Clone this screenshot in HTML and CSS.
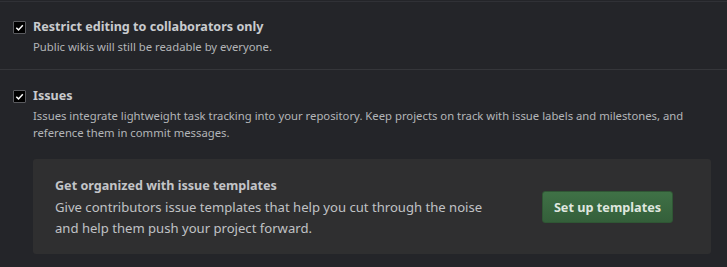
FILE: index.html
```html
<!DOCTYPE html>
<html lang="en">
<head>
<meta charset="utf-8">
<title>Settings</title>
<link rel="stylesheet" href="styles.css">
</head>
<body>
<div class="settings">
  <div class="option first">
    <span class="checkbox"><svg viewBox="0 0 12 12" width="11" height="11"><path d="M2.5 6.3 L4.9 8.6 L9.6 3.6" fill="none" stroke="#fff" stroke-width="1.6"/></svg></span>
    <div class="option-body">
      <div class="option-title">Restrict editing to collaborators only</div>
      <div class="option-note">Public wikis will still be readable by everyone.</div>
    </div>
  </div>
  <div class="option second">
    <span class="checkbox"><svg viewBox="0 0 12 12" width="11" height="11"><path d="M2.5 6.3 L4.9 8.6 L9.6 3.6" fill="none" stroke="#fff" stroke-width="1.6"/></svg></span>
    <div class="option-body">
      <div class="option-title">Issues</div>
      <div class="option-note">Issues integrate lightweight task tracking into your repository. Keep projects on track with issue labels and milestones, and reference them in commit messages.</div>
      <div class="promo">
        <div class="promo-text">
          <div class="promo-title">Get organized with issue templates</div>
          <div class="promo-desc">Give contributors issue templates that help you cut through the noise<br>and help them push your project forward.</div>
        </div>
        <button class="btn">Set up templates</button>
      </div>
    </div>
  </div>
</div>
</body>
</html>
```
FILE: styles.css
```css
html, body {
  margin: 0;
  padding: 0;
  background: #242529;
}
body {
  font-family: "Noto Sans", "Open Sans", sans-serif;
  color: #c9cbce;
  width: 727px;
  height: 267px;
  overflow: hidden;
}
.settings {
  margin-top: 1px;
  border-top: 1px solid #303136;
}
.option {
  display: flex;
  gap: 7px;
  padding: 0 16px 0 13px;
}
.option.first {
  padding-top: 17px;
  padding-bottom: 13.5px;
  border-bottom: 1px solid #35363a;
}
.option.second {
  padding-top: 18px;
}
.checkbox {
  flex: none;
  width: 11px;
  height: 11px;
  margin-top: 2px;
  background: #000;
  border: 1px solid #5a5b5f;
  border-radius: 1px;
  display: flex;
  align-items: center;
  justify-content: center;
}
.checkbox svg { display: block; }
.option-body {
  flex: 1;
  min-width: 0;
}
.option-title {
  font-size: 12.6px;
  font-weight: 700;
  line-height: 16px;
  color: #c9cbce;
}
.option-note {
  font-size: 11.3px;
  line-height: 17.5px;
  margin-top: 2.5px;
  color: #b3b5b8;
}
.first .option-note {
  margin-top: 3px;
}
.promo {
  margin-top: 17px;
  background: #2f2f30;
  border-radius: 3px;
  padding: 18px 38px 15px 22px;
  display: flex;
  align-items: center;
  justify-content: space-between;
}
.promo-title {
  font-size: 12.6px;
  font-weight: 700;
  line-height: 18px;
  color: #c3c5c8;
}
.promo-desc {
  font-size: 13.1px;
  line-height: 21px;
  margin-top: 2px;
  color: #c0c2c5;
}
.btn {
  font-family: inherit;
  font-size: 12.7px;
  font-weight: 700;
  color: #dfe6df;
  background: linear-gradient(#3f7146, #345f3a);
  border: 1px solid #2f5634;
  border-radius: 3px;
  width: 131px;
  height: 32px;
  padding: 0;
  margin-top: -2px;
  cursor: pointer;
}
```
